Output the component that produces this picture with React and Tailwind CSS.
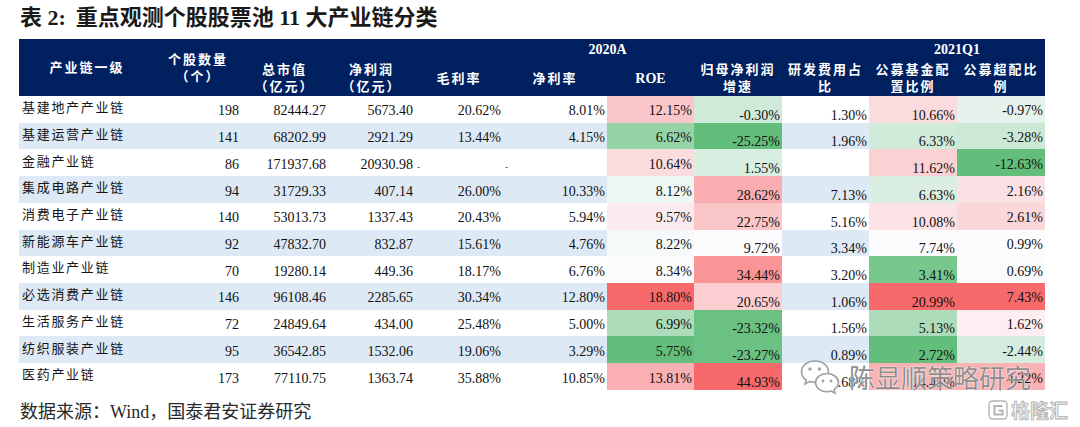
import React from "react";

const rows = [
  ["基建地产产业链", "198", "82444.27", "5673.40", "20.62%", "8.01%", "12.15%", "-0.30%", "1.30%", "10.66%", "-0.97%"],
  ["基建运营产业链", "141", "68202.99", "2921.29", "13.44%", "4.15%", "6.62%", "-25.25%", "1.96%", "6.33%", "-3.28%"],
  ["金融产业链", "86", "171937.68", "20930.98", "-", "-", "10.64%", "1.55%", "", "11.62%", "-12.63%"],
  ["集成电路产业链", "94", "31729.33", "407.14", "26.00%", "10.33%", "8.12%", "28.62%", "7.13%", "6.63%", "2.16%"],
  ["消费电子产业链", "140", "53013.73", "1337.43", "20.43%", "5.94%", "9.57%", "22.75%", "5.16%", "10.08%", "2.61%"],
  ["新能源车产业链", "92", "47832.70", "832.87", "15.61%", "4.76%", "8.22%", "9.72%", "3.34%", "7.74%", "0.99%"],
  ["制造业产业链", "70", "19280.14", "449.36", "18.17%", "6.76%", "8.34%", "34.44%", "3.20%", "3.41%", "0.69%"],
  ["必选消费产业链", "146", "96108.46", "2285.65", "30.34%", "12.80%", "18.80%", "20.65%", "1.06%", "20.99%", "7.43%"],
  ["生活服务产业链", "72", "24849.64", "434.00", "25.48%", "5.00%", "6.99%", "-23.32%", "1.56%", "5.13%", "1.62%"],
  ["纺织服装产业链", "95", "36542.85", "1532.06", "19.06%", "3.29%", "5.75%", "-23.27%", "0.89%", "2.72%", "-2.44%"],
  ["医药产业链", "173", "77110.75", "1363.74", "35.88%", "10.85%", "13.81%", "44.93%", "3.68%", "14.45%", "4.22%"],
];

// excel-style 3 colour scale: min green, median white, max red
const HEAT_COLS = [6, 7, 9, 10];
const LOW_COLS = [7, 8, 9];

const stats = {};
HEAT_COLS.forEach((c) => {
  const vals = rows.map((r) => parseFloat(r[c])).filter((v) => !isNaN(v));
  const sorted = [...vals].sort((a, b) => a - b);
  stats[c] = {
    min: sorted[0],
    mid: sorted[Math.floor(sorted.length / 2)],
    max: sorted[sorted.length - 1],
  };
});

const mix = (a, b, t) => a.map((x, i) => Math.round(x + (b[i] - x) * t));

const heat = (value, col) => {
  const v = parseFloat(value);
  if (isNaN(v)) return undefined;
  const { min, mid, max } = stats[col];
  const white = [252, 252, 255];
  const rgb =
    v >= mid
      ? mix(white, [248, 105, 107], max === mid ? 0 : (v - mid) / (max - mid))
      : mix(white, [99, 190, 123], (mid - v) / (mid - min));
  return `rgb(${rgb.join(",")})`;
};

const GRID =
  "grid grid-cols-[136px_86px_87px_87px_88px_104px_87px_88px_87px_88px_88px]";

const HeadCell = ({ children, className = "" }) => (
  <div
    className={`flex flex-col items-center justify-center text-center text-[13px] leading-[17px] font-bold tracking-[2px] text-white ${className}`}
  >
    {children}
  </div>
);

const WeChatIcon = () => (
  <svg width="42" height="36" viewBox="0 0 42 36" fill="none">
    <path
      d="M16 2C8.5 2 2.5 6.8 2.5 12.8c0 3.3 1.8 6.2 4.7 8.2L6 25l4.6-2.4c1.7.5 3.5.8 5.4.8 7.5 0 13.5-4.8 13.5-10.6S23.5 2 16 2z"
      fill="#fff"
      stroke="#9b9b9b"
      strokeWidth="1.6"
    />
    <circle cx="11" cy="10" r="1.7" fill="#9b9b9b" />
    <circle cx="20.5" cy="10" r="1.7" fill="#9b9b9b" />
    <path
      d="M28 14.5c-6.4 0-11.5 4.1-11.5 9.1s5.1 9.1 11.5 9.1c1.5 0 2.9-.2 4.2-.6l3.8 2-1-3.4c2.6-1.7 4.5-4.2 4.5-7.1 0-5-5.1-9.1-11.5-9.1z"
      fill="#fff"
      stroke="#9b9b9b"
      strokeWidth="1.6"
    />
    <circle cx="24" cy="22" r="1.4" fill="#9b9b9b" />
    <circle cx="32" cy="22" r="1.4" fill="#9b9b9b" />
  </svg>
);

const GlhIcon = () => (
  <svg width="20" height="20" viewBox="0 0 20 20" fill="none">
    <rect x="1" y="1" width="18" height="18" rx="3.5" stroke="#b5b5b5" strokeWidth="1.4" />
    <path
      d="M14.5 6H6.5v8.5h8V10.5h-4"
      stroke="#b5b5b5"
      strokeWidth="2.2"
      fill="none"
    />
  </svg>
);

export default function App() {
  return (
    <div className="relative w-[1080px] h-[427px] overflow-hidden bg-white font-['Liberation_Serif','Noto_Sans_CJK_SC',serif] text-[#111]">
      <h1 className="flex h-[39px] pl-[20px] pt-[6px] text-[22px] leading-[24px] font-bold text-[#1a1a1a]">
        <span>表 2:</span>
        <span className="ml-[10px]">重点观测个股股票池 11 大产业链分类</span>
      </h1>

      <div className="ml-[19px] w-[1026px]">
        {/* header */}
        <div className={`${GRID} grid-rows-[21px_36px] bg-[#002060]`}>
          <HeadCell className="row-span-2">产业链一级</HeadCell>
          <HeadCell className="row-span-2">
            <span>个股数量</span>
            <span>（个）</span>
          </HeadCell>
          <div />
          <div />
          <div className="col-span-4 flex items-center justify-center pl-[18px] text-[14px] font-bold text-white">
            2020A
          </div>
          <div />
          <div className="col-span-2 flex items-center justify-center text-[14px] font-bold text-white">
            2021Q1
          </div>
          <HeadCell>
            <span>总市值</span>
            <span>（亿元）</span>
          </HeadCell>
          <HeadCell>
            <span>净利润</span>
            <span>（亿元）</span>
          </HeadCell>
          <HeadCell>毛利率</HeadCell>
          <HeadCell>净利率</HeadCell>
          <HeadCell className="text-[14px] tracking-normal">ROE</HeadCell>
          <HeadCell>
            <span>归母净利润</span>
            <span>增速</span>
          </HeadCell>
          <HeadCell>
            <span>研发费用占</span>
            <span>比</span>
          </HeadCell>
          <HeadCell>
            <span>公募基金配</span>
            <span>置比例</span>
          </HeadCell>
          <HeadCell>
            <span>公募超配比</span>
            <span>例</span>
          </HeadCell>
        </div>

        {/* body */}
        {rows.map((row, ri) => (
          <div
            key={row[0]}
            className={`${GRID} h-[26.73px] ${ri % 2 === 1 ? "bg-[#dde9f5]" : "bg-white"}`}
          >
            {row.map((cell, ci) => {
              if (ci === 0) {
                return (
                  <div
                    key={ci}
                    className="flex items-center pb-[3px] pl-[3px] text-[13px] tracking-[1.7px] text-[#151515]"
                  >
                    {cell}
                  </div>
                );
              }
              if (cell === "-") {
                return (
                  <div key={ci} className="flex items-end pb-[4px] pl-[2px] text-[9px] leading-[10px]">
                    -
                  </div>
                );
              }
              const bg = HEAT_COLS.includes(ci) ? heat(cell, ci) : undefined;
              const low = LOW_COLS.includes(ci);
              return (
                <div
                  key={ci}
                  style={bg ? { backgroundColor: bg } : undefined}
                  className={`flex justify-end pr-[2px] text-[14px] ${
                    low ? "items-end leading-[14px]" : "items-center pt-[4px] leading-[16px]"
                  }`}
                >
                  {cell}
                </div>
              );
            })}
          </div>
        ))}
      </div>

      <p className="mt-[12px] pl-[20px] text-[18px] leading-[20px] text-[#2a2a2a]">
        数据来源：Wind，国泰君安证券研究
      </p>

      {/* watermark */}
      <div className="absolute left-[799px] top-[359px] flex items-center gap-[8px] opacity-95">
        <WeChatIcon />
        <span className="font-['Noto_Sans_CJK_SC',sans-serif] text-[26px] leading-[30px] text-[#8c8c8c] [text-shadow:0_0_2px_#fff,0_0_1px_#fff]">
          陈显顺策略研究
        </span>
      </div>
      <div className="absolute left-[988px] top-[399px] flex items-center gap-[3px]">
        <GlhIcon />
        <span className="font-['Noto_Sans_CJK_SC',sans-serif] text-[19px] leading-[22px] font-bold text-[#f4f4f4] [-webkit-text-stroke:0.8px_#b0b0b0]">
          格隆汇
        </span>
      </div>
    </div>
  );
}
